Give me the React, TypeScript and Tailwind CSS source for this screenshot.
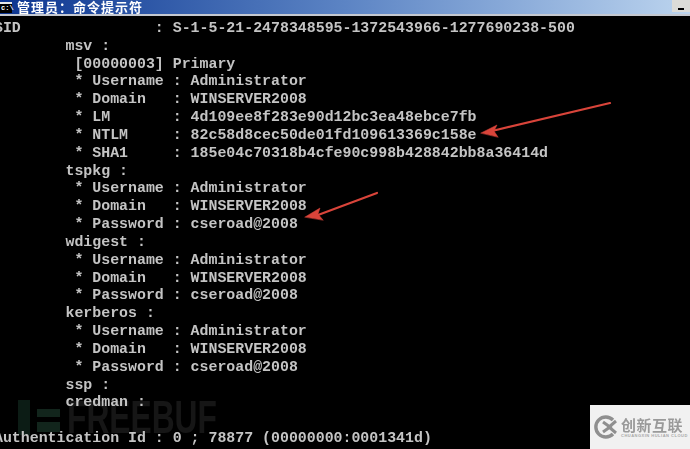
const lines = [
  'SID               : S-1-5-21-2478348595-1372543966-1277690238-500',
  '        msv :',
  '         [00000003] Primary',
  '         * Username : Administrator',
  '         * Domain   : WINSERVER2008',
  '         * LM       : 4d109ee8f283e90d12bc3ea48ebce7fb',
  '         * NTLM     : 82c58d8cec50de01fd109613369c158e',
  '         * SHA1     : 185e04c70318b4cfe90c998b428842bb8a36414d',
  '        tspkg :',
  '         * Username : Administrator',
  '         * Domain   : WINSERVER2008',
  '         * Password : cseroad@2008',
  '        wdigest :',
  '         * Username : Administrator',
  '         * Domain   : WINSERVER2008',
  '         * Password : cseroad@2008',
  '        kerberos :',
  '         * Username : Administrator',
  '         * Domain   : WINSERVER2008',
  '         * Password : cseroad@2008',
  '        ssp :',
  '        credman :',
  ' ',
  'Authentication Id : 0 ; 78877 (00000000:0001341d)',
];

function TitleBar() {
  return (
    <div className="flex h-[16px] shrink-0 items-start justify-between border-b-[2px] border-[#c4c8d0] bg-gradient-to-r from-[#0c3490] via-[#5c84c4] to-[#bcd4ee]">
      <div className="flex items-center gap-[5px]">
        <div className="mt-[1px] flex h-[11px] w-[12px] items-start border-t-[2px] border-[#e8e8e8] bg-black pl-[1px] font-['Liberation_Mono'] text-[7px] leading-[8px] font-bold text-white">
          c:\
        </div>
        <span className="font-['Noto_Sans_CJK_SC',sans-serif] text-[13px] leading-[13px] font-bold tracking-[1px] text-white blur-[0.4px]">
          管理员：命令提示符
        </span>
      </div>
      <div className="flex h-[12px] w-[18px] items-end justify-center bg-[#dcdcd8] pb-[2px]">
        <div className="h-[2px] w-[6px] bg-black" />
      </div>
    </div>
  );
}

function Watermark() {
  return (
    <div className="absolute top-[400px] left-[18px] flex items-center blur-[0.6px]">
      <div className="flex w-[49px] shrink-0 items-stretch gap-[7px]">
        <div className="h-[35px] w-[12px] bg-[#0c1c15]" />
        <div className="flex flex-col justify-center gap-[5px] pt-[6px]">
          <div className="h-[8px] w-[23px] bg-[#12251c]" />
          <div className="h-[10px] w-[23px] bg-[#12251c]" />
        </div>
      </div>
      <span className="origin-left scale-x-[0.69] font-['Liberation_Sans',sans-serif] text-[46px] leading-[35px] font-bold text-[#161616]">
        FREEBUF
      </span>
    </div>
  );
}

function Arrows() {
  return (
    <svg className="absolute top-0 left-0" width="690" height="449" viewBox="0 0 690 449">
      <g fill="#d9443a" stroke="#d9443a" strokeLinecap="round" className="blur-[0.3px]">
        <line x1="610" y1="103" x2="492" y2="131" strokeWidth="2.2" />
        <path d="M481 133 L497 125 L494 131 L498 137 Z" strokeWidth="0.5" />
        <line x1="377" y1="193" x2="318" y2="215" strokeWidth="2.2" />
        <path d="M305 217 L320 208 L318 214 L323 220 Z" strokeWidth="0.5" />
      </g>
    </svg>
  );
}

function LogoBox() {
  return (
    <div className="absolute right-0 bottom-0 flex h-[44px] w-[100px] items-center gap-[3px] bg-[#f1f1f1] pl-[4px]">
      <svg width="24" height="24" viewBox="0 0 24 24" fill="none" stroke="#8f8f8f" strokeWidth="3.4">
        <path d="M19 5 A10 10 0 1 0 19 19" />
        <path d="M9 7 L16 12 L9 17 M22 6 L15 12 L22 18" strokeWidth="3" />
      </svg>
      <div className="flex flex-col">
        <span className="font-['Noto_Sans_CJK_SC',sans-serif] text-[15px] leading-[17px] font-bold tracking-[0.5px] text-[#9a9a9a] blur-[0.3px]">
          创新互联
        </span>
        <span className="font-['Liberation_Sans',sans-serif] text-[4px] leading-[5px] font-bold tracking-[0.5px] whitespace-nowrap text-[#a8a8a8]">
          CHUANGXIN HULIAN CLOUD
        </span>
      </div>
    </div>
  );
}

export default function App() {
  return (
    <div className="relative flex h-[449px] w-[690px] flex-col overflow-hidden bg-black">
      <TitleBar />
      <Watermark />
      <div className="relative -ml-[6px] pt-[4px] font-['Liberation_Mono',monospace] text-[14.9px] leading-[17.83px] font-bold whitespace-pre text-[#c4c4c4] blur-[0.5px]">
        {lines.map((line, i) => (
          <div key={i}>{line}</div>
        ))}
      </div>
      <Arrows />
      <LogoBox />
    </div>
  );
}
